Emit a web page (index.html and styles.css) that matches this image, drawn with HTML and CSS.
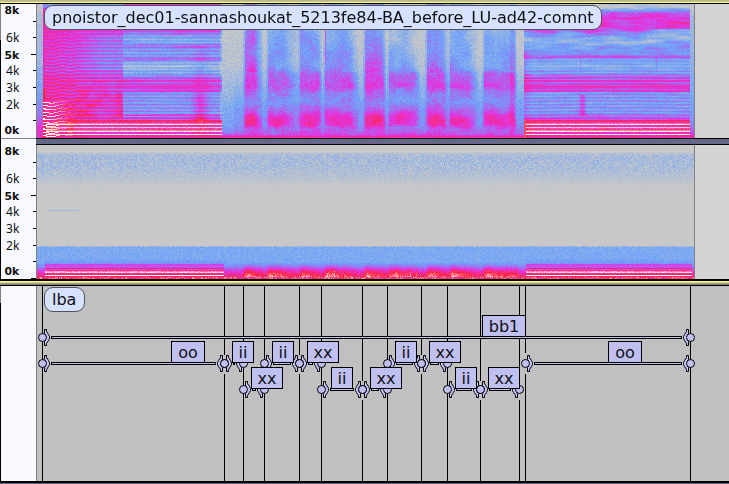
FILE: index.html
```
<!DOCTYPE html>
<html lang="en">
<head>
<meta charset="utf-8">
<title>Spectrogram tracks</title>
<link rel="stylesheet" href="styles.css">
</head>
<body>
<main class="tracks">
  <div class="focus-strip top"></div>
  <section class="track upper">
    <div class="ruler">
      <svg class="scale" width="37" height="135"><g class="numbers"><text class="strong" x="19.3" y="10">8k</text><text x="19.3" y="37.5">6k</text><text class="strong" x="19.3" y="54.5">5k</text><text x="19.3" y="70.5">4k</text><text x="19.3" y="87.5">3k</text><text x="19.3" y="104.5">2k</text><text class="strong" x="19.3" y="130">0k</text></g><path class="ticks" d="M33 17.5h3M33 33.5h3M31 50.5h5M33 66.5h3M33 83.5h3M33 100.5h3M33 116.5h3"/></svg>
    </div>
    <div class="wave"><canvas id="upper" width="657" height="134"></canvas><div class="name clip-name">pnoistor_dec01-sannashoukat_5213fe84-BA_before_LU-ad42-comnt</div></div>
  </section>
  <div class="divider"><i></i><b></b></div>
  <section class="track lower">
    <div class="ruler">
      <svg class="scale" width="37" height="134"><g class="numbers"><text class="strong" x="19.3" y="10">8k</text><text x="19.3" y="37.5">6k</text><text class="strong" x="19.3" y="54.5">5k</text><text x="19.3" y="70.5">4k</text><text x="19.3" y="87.5">3k</text><text x="19.3" y="104.5">2k</text><text class="strong" x="19.3" y="130">0k</text></g><path class="ticks" d="M33 17.5h3M33 33.5h3M31 50.5h5M33 66.5h3M33 83.5h3M33 100.5h3M33 116.5h3M31 133.5h5"/></svg>
    </div>
    <div class="wave"><canvas id="lower" width="657" height="134"></canvas></div>
  </section>
  <div class="focus-strip middle"></div>
  <section class="track labels">
    <div class="ruler"></div>
    <div class="wave"><div class="name label-name">lba</div>
      <svg id="timeline" width="692" height="195" viewBox="37 286 692 195"></svg></div>
  </section>
  <div class="end"></div>
</main>
<script src="tracks.js"></script>
</body>
</html>
```
FILE: styles.css
```
body { margin: 0; width: 729px; height: 484px; overflow: hidden; background: #c0c0c0; font-family: "DejaVu Sans", sans-serif; color: #101010; }
.tracks { display: flex; flex-direction: column; height: 484px; }
.focus-strip.top { height: 4px; background: linear-gradient(#b8b894 0 1px, #c4c480 1px 2px, #ffff80 2px 3px, #000 3px); }
.focus-strip.middle { height: 7px; background: linear-gradient(#000 0 2px, #ffff80 2px 3px, #d8d880 3px 4px, #a0a090 4px 5px, #808080 5px 6px, #000 6px); }
.track { display: flex; position: relative; }
.upper, .lower { height: 134px; }
.labels { height: 195px; }
.ruler { box-sizing: border-box; width: 37px; flex: none; background: #f8f9ff; border-left: 1px solid #000; border-right: 1px solid #808080; }
.upper .ruler { border-image: linear-gradient(#808080 36px, #000 36px) 1; border-width: 0 0 0 1px; border-style: solid; box-shadow: inset -1px 0 #808080; }
.labels .ruler { border-image: linear-gradient(#808080 18px, #000 18px) 1; border-width: 0 0 0 1px; border-style: solid; box-shadow: inset -1px 0 #808080; }
.scale { display: block; margin-left: -1px; overflow: visible; }
.numbers { font-size: 11.7px; fill: #101010; text-anchor: end; }
.numbers text:not(.strong) { font-family: "Noto Sans", sans-serif; font-size: 12px; }
.numbers .strong { font-weight: 700; font-size: 10.8px; }
.ticks { stroke: #000; stroke-width: 1; }
.wave { flex: 1; position: relative; background: #d4d4d4; }
.labels .wave { background: #c0c0c0; }
canvas, #timeline { display: block; }
canvas { border-right: 1px solid #808080; }
.name { position: absolute; box-sizing: border-box; border: 1.5px solid #505256; background: #d6e2ff; border-radius: 9px; font-size: 16px; line-height: 23px; padding: 0 7.5px; white-space: nowrap; }
.clip-name { left: 6.5px; top: 1px; width: 558px; height: 25px; }
.label-name { left: 6.5px; top: 1px; width: 41.5px; height: 25px; }
.divider { display: flex; height: 7px; }
.divider i { width: 36px; background: linear-gradient(#808080 1px, #f8f9ff 1px); box-shadow: inset 1px 0 #000; }
.divider b { flex: 1; background: linear-gradient(#000 1px, #646886 1px 6px, #000 6px); }
.end { height: 3px; background: linear-gradient(#000 2px, #646886 2px); }
.edge { stroke: #000; stroke-width: 1; }
.bar, .handle, .tag rect { fill: #bfc0f0; stroke: #000; stroke-width: 1; }
.tag text { font-size: 16px; fill: #101014; stroke: none; text-anchor: middle; }
```
FILE: tracks.js
```
// Deterministic per-cell noise and smooth noise.
function hash(x, y) {
  let h = (x * 374761393 + y * 668265263) | 0;
  h = Math.imul(h ^ (h >>> 13), 1274126177);
  return ((h ^ (h >>> 16)) >>> 0) / 4294967296;
}
function smooth(x, y, sx, sy) {
  x /= sx; y /= sy;
  const a = Math.floor(x), b = Math.floor(y), u = x - a, v = y - b;
  const top = hash(a, b) * (1 - u) + hash(a + 1, b) * u;
  const low = hash(a, b + 1) * (1 - u) + hash(a + 1, b + 1) * u;
  return top * (1 - v) + low * v;
}
function curve(points, t) {
  if (t <= points[0][0]) return points[0][1];
  for (let i = 1; i < points.length; i++) {
    if (t <= points[i][0]) {
      const [a, p] = points[i - 1], [b, q] = points[i];
      return p + (q - p) * (t - a) / (b - a);
    }
  }
  return points[points.length - 1][1];
}
const palette = [[200, 200, 200], [108, 162, 250], [228, 50, 226], [255, 38, 60], [255, 250, 248]];
function paint(id, top, level) {
  const c = document.getElementById(id), g = c.getContext('2d');
  const img = g.createImageData(c.width, c.height);
  for (let j = 0; j < c.height; j++) for (let i = 0; i < c.width; i++) {
    const v = Math.max(0, Math.min(0.9999, level(i + 37, j + top))) * 4;
    const k = Math.floor(v), f = v - k, o = (j * c.width + i) * 4;
    for (let n = 0; n < 3; n++) img.data[o + n] = palette[k][n] * (1 - f) + palette[k + 1][n] * f;
    img.data[o + 3] = 255;
  }
  g.putImageData(img, 0, 0);
}

const attack = [[6, .2], [10, .49], [30, .47], [50, .43], [70, .41], [80, .5], [92, .48], [105, .55], [118, .56], [122, .56], [137, .59]];
const sustain = [[28, .43], [32, .42], [35, .27], [40, .18], [46, .37], [50, .25], [56, .28], [59, .43], [61, .22], [66, .1], [70, .18], [75, .28], [79, .43], [90, .46], [93, .28], [112, .27], [117, .4], [121, .56], [137, .6]];
const closing = [[7, .02], [9, .2], [13, .43], [17, .5], [25, .49], [29, .46], [34, .28], [39, .17], [43, .14], [48, .27], [54, .28], [56, .44], [59, .24], [66, .18], [73, .28], [77, .43], [90, .47], [93, .26], [111, .26], [117, .4], [121, .57], [137, .6]];
const voiced = [[30, .19], [50, .23], [66, .28], [76, .39], [86, .45], [92, .33], [102, .28], [111, .39], [115, .48], [119, .53], [125, .51], [128, .37], [134, .42], [137, .6]];
const silence = [[30, .01], [60, .04], [80, .08], [96, .13], [107, .2], [125, .23], [132, .32], [135, .4], [137, .6]];
// start, fade start, end, strength of the upper half, overall offset
const sounds = [[245, 254, 262, .14, .05], [268, 284, 299, 0, 0], [300, 318, 321, .05, .03], [325, 350, 358, 0, .01], [365, 382, 385, .08, .06], [389, 414, 419, -.07, -.01], [427, 443, 447, .07, .04], [450, 468, 477, 0, .01], [484, 513, 516, -.04, .01]];

function partials(x, y, spacing, bottom, depth) {
  return depth * Math.cos((bottom - y) / spacing * Math.PI * 2);
}
function whiteLine(y) {
  return { 123: .84, 124: .97, 127: .93, 128: .8, 130: .86, 131: .98, 134: .99 }[y] || 0;
}

paint('upper', 4, (x, y) => {
  const n = hash(x, y) - .5, s = smooth(x, y, 7, 5) - .5;
  let v;
  if (x < 43) v = curve([[7, 0], [15, .08], [60, .12], [95, .25], [115, .35], [125, .48], [137, .56]], y) + n * .13;
  else if (x < 222) {
    const wobble = x < 75 ? Math.sin(x / 3) * .7 - (75 - x) * .05 : 0;
    const stripe = partials(x, y + wobble, 3.35, 134.3, 1);
    if (x < 123) {
      v = curve(attack, y) + stripe * curve([[20, .05], [65, .1], [137, .12]], y);
      v += Math.max(0, 1 - (x - 44) / 55) * .1;
      if (x > 75 && y > 34 && y < 70) v -= .08 * Math.min(1, (x - 75) / 30);
      if (y > 80 && y < 119 && x > 75) v += s * .22;
      if (y > 100 && x < 78 && stripe > .5) v += .28 * (1 - (x - 44) / 34);
    } else {
      v = curve(sustain, y) + stripe * (y > 110 ? .1 : .07);
      v += (smooth(x, y, 18, 2) - .5) * .1;
      const bump = Math.exp(-Math.pow((x - 200) / 7, 2));
      if (y > 45) v += bump * curve([[45, .08], [90, .05], [95, .18], [112, .22], [119, .22], [122, .06]], y);
    }
    if (y === 120) v = .7 + n * .05;
    if (y === 115 || y === 117) v = Math.max(v, .52);
    if ((y === 80 || y === 86) && x > 60) v = Math.max(v, .56);
    v += n * .1;
    if (whiteLine(y) && x > 45) v = Math.max(v, whiteLine(y) + n * .08);
    if (x < 45 && y > 10) v = Math.max(v, y > 88 ? .75 : .54);
    if (x > 219 && y < 120) v -= .12;
  } else if (x < 524) {
    v = curve(silence, y);
    if (x > 233) v += .05 * Math.min(1, Math.max(0, (y - 65) / 30));
    for (const [a, f, b, high, all] of sounds) {
      if (x < a - 2 || x > b) continue;
      const weight = x < a ? .35 : x <= f ? 1 : Math.pow(1 - (x - f) / (b - f + 1), .7);
      let t = curve(voiced, y + (smooth(x, 3, 6, 1) - .5) * 5) + all;
      if (y < 72) t += high * .7 + (smooth(x, y, 9, 13) - .5) * .17 - Math.max(0, (x - a) / (b - a) - .45) * .2;
      else t += s * .1;
      if (y > 113 && y < 125) t += .04 * Math.cos((x - (a + f) / 2) / 6);
      v = v * (1 - weight) + t * weight;
    }
    if (x > 480 && x < 516 && y < 70) v += Math.max(0, x - 500) / 15 * .14 - .03;
    if (x > 509 && x < 515) v += .08;
    if (x === 325 && y < 65) v = .4;
    v += n * .13;
    if (y > 134) v = .51 + n * .12 + (y === 136 ? .1 : 0);
  } else if (x < 690) {
    const drift = y > 28 && y < 48 ? Math.sin(x / 8) * 1.5 + Math.max(0, x - 630) * .13 : 0;
    v = curve(closing, y + drift) + partials(x, y + Math.sin(x / 30) * .3, 3.35, 134.3, y > 70 ? .08 : y > 55 ? .045 : 0);
    v += (smooth(x, y, 12, 2) - .5) * (y < 50 ? .2 : .1) + n * .09;
    if (x < 533 && y > 50) v += .1 * (1 - (x - 524) / 9);
    if (y < 29 && x > 655 && y > 21) v += .06;
    if ((x === 580 || x === 656) && y > 56 && y < 72) v += .1;
    if (y > 94 && y < 116) v += .22 * Math.exp(-Math.pow((x - 582) / 3, 2));
    if (y === 86) v = Math.max(v, .59);
    if (y === 90 || y === 80) v = Math.max(v, .56);
    if (y === 120) v = .7;
    if (y === 121) v = .63;
    if (whiteLine(y)) v = Math.max(v, whiteLine(y) + n * .07);
    if (x < 526 && y > 119) v = .8;
  } else v = curve([[8, 0], [15, .1], [90, .2], [120, .28], [130, .4], [137, .6]], y) + n * .12;
  if (y > 135 && x < 690) v = Math.max(v, .56 + n * .14);
  return v;
});

paint('lower', 145, (x, y) => {
  const n = hash(x + 911, y + 37), c = n - .5;
  if (y < 152) return 0;
  if (y < 200) {
    const density = curve([[152, .02], [154, .08], [158, .1], [168, .085], [178, .045], [184, .012], [194, 0]], y);
    const grain = x === 42 ? .08 : 0;
    return Math.max(0, density + (n - .55) * density * 1.7) + grain * density * 10;
  }
  if (y === 210 && x > 45 && x < 91) return x < 78 ? .1 : n * .08;
  if (y < 246) return 0;
  if (y === 246) return n * .22;
  let v = .205 + c * .1;
  const harmonic = (x >= 45 && x < 224) || (x >= 526 && x < 692);
  if (harmonic) {
    v += curve([[258, 0], [263, .08], [264, .23], [267, .25], [277, .3]], y);
    if (y === 264) v = .47 + c * .06;
    if (y === 265 || y === 267) v = .45 + c * .07;
    if (y === 266) v = .42;
    if (y === 268) v = .68 + c * .05;
    if (y === 270) v = .54;
    if (y === 271) v = .87 + c * .12;
    if (y === 272) v = .95 + c * .1;
    if (y === 273) v = .6;
    if (y === 275) v = .99;
    if (y === 274 || y === 276) v = .7;
  } else {
    let power = .03;
    for (const [a, , b] of sounds) {
      const rise = Math.min(1, (x - a + 3) / 5), fall = 1 - (x - a) / (b - a + 6);
      if (rise > 0 && fall > 0) power = Math.max(power, .03 + rise * fall * .25 * (1 + (smooth(x, 1, 4, 1) - .5) * .5));
    }
    if (x > 484 && x < 518) power = Math.max(power, .17);
    if (x < 45) power = .02;
    v += curve([[262, 0], [267, .12], [270, .23], [274, .37], [277, .45]], y) + power * curve([[261, 0], [266, .4], [271, 1], [278, 1]], y);
    v += c * .08 * Math.max(0, (y - 268) / 8);
    if ((x === 334 || x === 410 || x === 416) && y > 267) v += .12;
  }
  if (y > 276) v = .72 + c * .4;
  return v;
});

// Label track: region bars, shared edges, drag handles and captions.
const edges = [[42], [224, 355, 374], [243], [264], [299, 355, 374], [321], [362, 381, 400], [387], [421, 355, 374], [447], [480, 381, 400], [519, 381, 400], [525, 353, 374], [690]];
const regions = [[42, 690, 337, 482, 44, 'bb1'], [42, 224, 363, 171, 34, 'oo'], [224, 243, 363, 232, 22, 'ii'], [243, 264, 389, 251, 32, 'xx'], [264, 299, 363, 272, 22, 'ii'], [299, 321, 363, 307, 32, 'xx'], [321, 362, 389, 331, 22, 'ii'], [362, 387, 389, 370, 32, 'xx'], [387, 421, 363, 395, 22, 'ii'], [421, 447, 363, 429, 32, 'xx'], [447, 480, 389, 455, 22, 'ii'], [480, 519, 389, 488, 32, 'xx'], [525, 690, 363, 608, 34, 'oo']];
let art = '';
for (const [x, a, b] of edges) art += `<path class="edge" d="M${x + .5} 286V${a || 481}${a ? `M${x + .5} ${b}V481` : ''}"/>`;
for (const [a, b, y] of regions) if (b - a > 18) {
  const w = b - a - 18;
  art += `<rect class="bar" x="${a + 9.5}" y="${y - .5}" width="${w}" height="2"/>`;
}
for (const [a, b, y] of regions) for (const [x, d] of [[a, 1], [b, -1]]) {
  art += `<g class="handle" transform="translate(${x + .5} ${y + .5}) scale(${d} 1)"><path d="M2-8h2v2l2 3 1 2v2l-1 2-2 3v2H2V4l1-2v-4L2-4z"/></g>`;
}
for (const [a, b, y] of regions) for (const x of [a, b]) art += `<circle class="handle" cx="${x + .5}" cy="${y + .5}" r="4"/>`;
for (const [, , y, x, w, text] of regions) art += `<g class="tag"><rect x="${x + .5}" y="${y - 21.5}" width="${w - 1}" height="21"/><text x="${x + w / 2}" y="${y - 5}">${text}</text></g>`;
document.getElementById('timeline').innerHTML = art;
```
